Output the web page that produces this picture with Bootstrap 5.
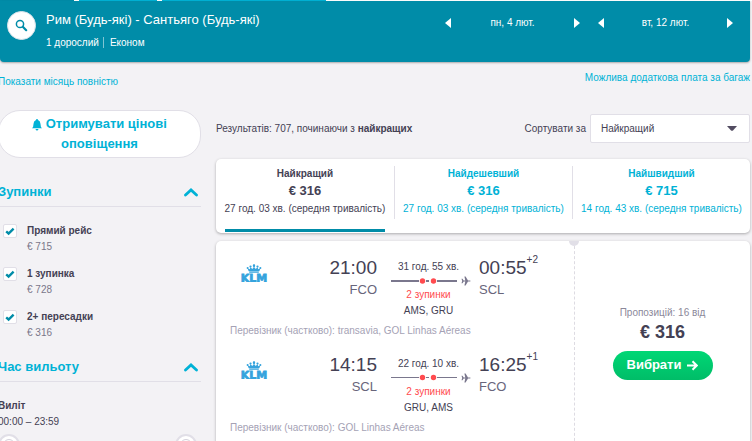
<!DOCTYPE html>
<html lang="uk">
<head>
<meta charset="utf-8">
<meta name="viewport" content="width=device-width, initial-scale=1">
<title>Рим – Сантьяго</title>
<link href="https://cdn.jsdelivr.net/npm/bootstrap@5.3.0/dist/css/bootstrap.min.css" rel="stylesheet">
<style>
:root{--teal:#008ca8;--cyan:#00b2d6;--ink:#444154;--pale:#a5a2b5;--line:#e1dfe7}
html{scrollbar-width:none}
body{font-family:"Liberation Sans",Arial,sans-serif;font-size:10px;line-height:16px;color:var(--ink);background:#f3f2f5;overflow-x:hidden}
a{color:var(--cyan);text-decoration:none}
button{font-family:inherit}
.strip{height:1px;background:linear-gradient(90deg,var(--teal) 74px,#fff 74px 79px,var(--cyan) 79px 157px,#fff 157px 162px,var(--cyan) 162px 326px,#fff 326px)}
.page{margin-right:2px}
.search-bar{background:var(--teal);color:#fff;min-height:61px;border-radius:0 0 4px 4px;box-shadow:0 1px 2px rgba(0,0,0,.3);padding:10px 17px 0 7px}
.round-btn{width:29px;height:29px;background:#fff;border:1px solid #d9e3ea;color:var(--teal)}
.trip{margin-left:10px}
.route{font-size:13px;line-height:18px}
.pax{padding-right:4px;border-right:1px solid #7fc5d3;line-height:11px}
.cabin{line-height:11px;margin-left:6px}
.days{gap:18px}
.day-picker{width:135px}
.day-btn{color:#fff;width:6px;height:12px}
.day-btn svg,.round-btn svg,.chev svg{display:block}
.side{width:201px}
.side-inner{margin-left:-2px}
.alert-btn{font-size:13px;line-height:20px;font-weight:700;color:var(--cyan);background:#fff;border:1px solid var(--line);border-radius:22px;padding:3px 20px;margin-top:20px}
.sec-head{font-size:13px;line-height:20px;font-weight:700;color:var(--cyan);border-bottom:1px solid var(--line);padding:0 3px 4px 0}
.sec-head h2{font:inherit;margin:0}
.stop-row{padding-left:5px;gap:10px;margin-bottom:11px}
.stop-row .form-check-input{width:14px;height:14px;margin:1px 0 0;border:1px solid var(--line);border-radius:2px;background-color:#fff;float:none}
.stop-row .form-check-input:checked{border-color:var(--line);background-color:#fff;background-size:14px;background-image:url("data:image/svg+xml,%3csvg xmlns='http://www.w3.org/2000/svg' viewBox='0 0 14 14'%3e%3cpath d='M3.200 7.400l2.400 2.100L10.600 4.600' fill='none' stroke='%23008ca8' stroke-width='2.400'/%3e%3c/svg%3e")}
.stop-price{color:#7a778a}
.knob{width:22px;height:22px;background:#fff;border:2px solid #e1dfe7;border-radius:50%;padding:3px}
.knob span{display:block;width:12px;height:12px;border:1px solid #d2d0da;border-radius:50%}
.results{margin-left:15px}
.sort-select{width:160px;height:29px;border:1px solid var(--line);border-radius:2px;color:var(--ink);font-size:10px;padding:0 10px;background-image:url("data:image/svg+xml,%3csvg xmlns='http://www.w3.org/2000/svg' viewBox='0 0 10 5'%3e%3cpath d='M0 0h10L6 4.500Q5 5.200 4 4.500z' fill='%23524c61'/%3e%3c/svg%3e");background-size:10px 5px;background-position:right 12px center}
.panel{background:#fff;border-radius:5px;box-shadow:0 1px 3px rgba(0,0,0,.3)}
.sort-tab{flex:1 1 0;min-width:0;border:0;background:none;padding:7px 0 1px;color:var(--cyan);white-space:nowrap}
.sort-tab .tab-body{height:53px}
.sort-tab+.sort-tab .tab-body{border-left:1px solid var(--line)}
.tab-price{font-size:13px;font-weight:700;line-height:17px}
.tab-time{margin-top:2px}
.tab-line{height:3px;margin:10px 9px 0}
.sort-tab.active{color:var(--ink)}
.sort-tab.active .tab-line{background:var(--teal)}
.legs{width:359px;border-right:1px dashed #dddbe2;padding:16px 0 0 14px}
.notch{position:absolute;left:353px;top:0;width:10px;height:5px;border-radius:0 0 5px 5px;background:#e1dfe7}
.leg{height:97px}
.airline{width:48px;padding-top:7px}
.time{font-size:19px;line-height:22px}
.time sup{font-size:10px;top:-11px}
.port{font-size:13px;line-height:21px;color:#68657b}
.dep{width:99px}
.mid{width:75px;margin:0 13px 0 14px;padding-top:2px}
.mid svg{display:block}
.red{color:#ff4b4f}
.carrier{color:var(--pale);white-space:nowrap;padding-top:4px}
.offer{padding-bottom:8px}
.price{font-size:18px;line-height:22px;font-weight:700}
.offer-note{color:#8b889a}
.select-btn{height:29px;width:100px;border:0;border-radius:15px;color:#fff;font-size:13px;font-weight:700;background:linear-gradient(#00d775,#00bd68);gap:6px}
</style>
<script src="https://cdn.jsdelivr.net/npm/bootstrap@5.3.0/dist/js/bootstrap.bundle.min.js" defer></script>
</head>
<body>
<svg class="d-none" aria-hidden="true">
<symbol id="klm" viewBox="0 0 30 18"><g fill="#35a3dd"><circle cx="15" cy="1.800" r="1.200"/><circle cx="11.500" cy="2.600" r="1.100"/><circle cx="18.500" cy="2.600" r="1.100"/><circle cx="8.600" cy="3.900" r="1"/><circle cx="21.400" cy="3.900" r="1"/><path d="M8.500 4.300l2.200 1 .8-2 1.800 1.800L15 2.800l1.700 2.300 1.800-1.800.8 2 2.200-1-1.200 2.900H9.700z"/><path d="M14.500 0h1v3h-1zM10.200 7.600h9.600v1.100h-9.600z"/></g><text x="15" y="17.500" text-anchor="middle" font-family="DejaVu Sans" font-weight="700" font-size="11" stroke="#35a3dd" stroke-width=".8" fill="#35a3dd">KLM</text></symbol>
<symbol id="route-line" viewBox="0 0 80 12"><path d="M0 6h28M35 6h3M46 6h20" stroke="#7a778d" stroke-width="2"/><circle cx="31.500" cy="6" r="2.700" fill="#ff4b4f"/><circle cx="42.500" cy="6" r="2.700" fill="#ff4b4f"/></symbol>
<symbol id="route-thin" viewBox="0 0 80 12"><path d="M0 5.500h28M35 5.500h3M46 5.500h20" stroke="#7a778d"/><circle cx="31.500" cy="5.500" r="2.700" fill="#ff4b4f"/><circle cx="42.500" cy="5.500" r="2.700" fill="#ff4b4f"/></symbol>
<symbol id="plane" viewBox="0 0 10 10"><path d="M.5 2.800h1l1.200 1.600h1.600L3.400.5h1.200L7 4.400h1.800q.9.200.9.600t-.9.600H7L4.600 9.500H3.400l.9-3.900H2.700L1.500 7.200h-1L1.200 5z" fill="#7a778d"/></symbol>
<symbol id="chev" viewBox="0 0 14 10"><path d="M1.500 8L7 3l5.500 5" fill="none" stroke="#00b2d6" stroke-width="2.800" stroke-linecap="round"/></symbol>
</svg>
<div class="strip"></div>
<div class="page">
<header class="search-bar d-flex align-items-start">
<button class="round-btn rounded-circle p-0 d-flex align-items-center justify-content-center flex-shrink-0" aria-label="Пошук"><svg width="13" height="13" viewBox="0 0 13 13" fill="none" stroke="currentColor"><circle cx="5" cy="5" r="3.600" stroke-width="1.500"/><path d="M7.800 7.800l3.400 3.400" stroke-width="2.200" stroke-linecap="round"/></svg></button>
<div class="trip flex-grow-1"><div class="route">Рим (Будь-які) - Сантьяго (Будь-які)</div><div class="d-flex mt-2"><span class="pax">1 дорослий</span><span class="cabin">Економ</span></div></div>
<div class="days d-flex pt-1">
<div class="day-picker d-flex align-items-center justify-content-between"><button class="day-btn border-0 p-0 bg-transparent" aria-label="Попередній день"><svg width="6" height="12"><path d="M6 1v10L0 6z" fill="#fff"/></svg></button><span>пн, 4 лют.</span><button class="day-btn border-0 p-0 bg-transparent" aria-label="Наступний день"><svg width="6" height="12"><path d="M0 1v10l6-5z" fill="#fff"/></svg></button></div>
<div class="day-picker d-flex align-items-center justify-content-between"><button class="day-btn border-0 p-0 bg-transparent" aria-label="Попередній день"><svg width="6" height="12"><path d="M6 1v10L0 6z" fill="#fff"/></svg></button><span>вт, 12 лют.</span><button class="day-btn border-0 p-0 bg-transparent" aria-label="Наступний день"><svg width="6" height="12"><path d="M0 1v10l6-5z" fill="#fff"/></svg></button></div>
</div>
</header>
<div class="d-flex">
<aside class="side flex-shrink-0"><div class="side-inner">
<div class="pt-2 mt-1"><a href="#">Показати місяць повністю</a></div>
<button class="alert-btn w-100 d-block"><svg width="10" height="12" viewBox="0 0 10 12" fill="currentColor"><path d="M5 0q1 0 1 1 2.500.8 2.500 4T10 9.200H0Q1.500 8 1.500 5T4 1q0-1 1-1zM3.500 10h3Q6.200 11.500 5 11.500T3.500 10z"/></svg> Отримувати цінові оповіщення</button>
<div class="sec-head d-flex justify-content-between align-items-center mt-4"><h2>Зупинки</h2><button class="chev border-0 bg-transparent p-0" aria-label="Згорнути зупинки"><svg width="14" height="10"><use href="#chev"/></svg></button></div>
<div class="pt-3">
<div class="stop-row d-flex"><input class="form-check-input" type="checkbox" id="s0" checked><label for="s0"><b>Прямий рейс</b><br><span class="stop-price">€ 715</span></label></div>
<div class="stop-row d-flex"><input class="form-check-input" type="checkbox" id="s1" checked><label for="s1"><b>1 зупинка</b><br><span class="stop-price">€ 728</span></label></div>
<div class="stop-row d-flex"><input class="form-check-input" type="checkbox" id="s2" checked><label for="s2"><b>2+ пересадки</b><br><span class="stop-price">€ 316</span></label></div>
</div>
<div class="sec-head d-flex justify-content-between align-items-center mt-3"><h2>Час вильоту</h2><button class="chev border-0 bg-transparent p-0" aria-label="Згорнути час вильоту"><svg width="14" height="10"><use href="#chev"/></svg></button></div>
<div class="pt-3"><b>Виліт</b><br>00:00 – 23:59</div>
<div class="d-flex justify-content-between mt-1 pe-1"><button class="knob" aria-label="Найраніший виліт"><span></span></button><button class="knob" aria-label="Найпізніший виліт"><span></span></button></div>
</div></aside>
<main class="results flex-grow-1">
<div class="text-end pt-2"><a href="#">Можлива додаткова плата за багаж</a></div>
<div class="d-flex align-items-center mt-4 pt-1"><span>Результатів: 707, починаючи з <b>найкращих</b></span><label class="ms-auto me-1" for="sort">Сортувати за</label><select class="form-select sort-select" id="sort"><option>Найкращий</option><option>Найдешевший</option><option>Найшвидший</option></select></div>
<div class="panel d-flex mt-3">
<button class="sort-tab active"><div class="tab-body"><b>Найкращий</b><div class="tab-price">€ 316</div><div class="tab-time">27 год. 03 хв. (середня тривалість)</div></div><div class="tab-line"></div></button>
<button class="sort-tab"><div class="tab-body"><b>Найдешевший</b><div class="tab-price">€ 316</div><div class="tab-time">27 год. 03 хв. (середня тривалість)</div></div><div class="tab-line"></div></button>
<button class="sort-tab"><div class="tab-body"><b>Найшвидший</b><div class="tab-price">€ 715</div><div class="tab-time">14 год. 43 хв. (середня тривалість)</div></div><div class="tab-line"></div></button>
</div>
<article class="panel d-flex position-relative mt-2">
<span class="notch"></span>
<div class="legs">
<div class="leg"><div class="d-flex"><div class="airline d-flex justify-content-center"><svg width="30" height="18" role="img" aria-label="KLM"><use href="#klm"/></svg></div><div class="dep text-end"><div class="time">21:00</div><div class="port">FCO</div></div><div class="mid text-center"><div>31 год. 55 хв.</div><svg width="80" height="12"><use href="#route-line"/><use href="#plane" x="70" y="1" width="10" height="10"/></svg><div class="red">2 зупинки</div><div>AMS, GRU</div></div><div><div class="time">00:55<sup>+2</sup></div><div class="port">SCL</div></div></div><div class="carrier">Перевізник (частково): transavia, GOL Linhas Aéreas</div></div>
<div class="leg"><div class="d-flex"><div class="airline d-flex justify-content-center"><svg width="30" height="18" role="img" aria-label="KLM"><use href="#klm"/></svg></div><div class="dep text-end"><div class="time">14:15</div><div class="port">SCL</div></div><div class="mid text-center"><div>22 год. 10 хв.</div><svg width="80" height="12"><use href="#route-thin"/><use href="#plane" x="70" y="1" width="10" height="10"/></svg><div class="red">2 зупинки</div><div>GRU, AMS</div></div><div><div class="time">16:25<sup>+1</sup></div><div class="port">FCO</div></div></div><div class="carrier">Перевізник (частково): GOL Linhas Aéreas</div></div>
</div>
<div class="offer flex-grow-1 d-flex flex-column align-items-center justify-content-center"><div class="offer-note">Пропозицій: 16 від</div><div class="price">€ 316</div><button class="select-btn d-flex align-items-center justify-content-center mt-2">Вибрати <svg width="11" height="11" viewBox="0 0 11 11" fill="none" stroke="#fff" stroke-width="2"><path d="M0 5.500h9.500M5.500 1.200l4.300 4.300-4.300 4.300"/></svg></button></div>
</article>
</main>
</div>
</div>
</body>
</html>
